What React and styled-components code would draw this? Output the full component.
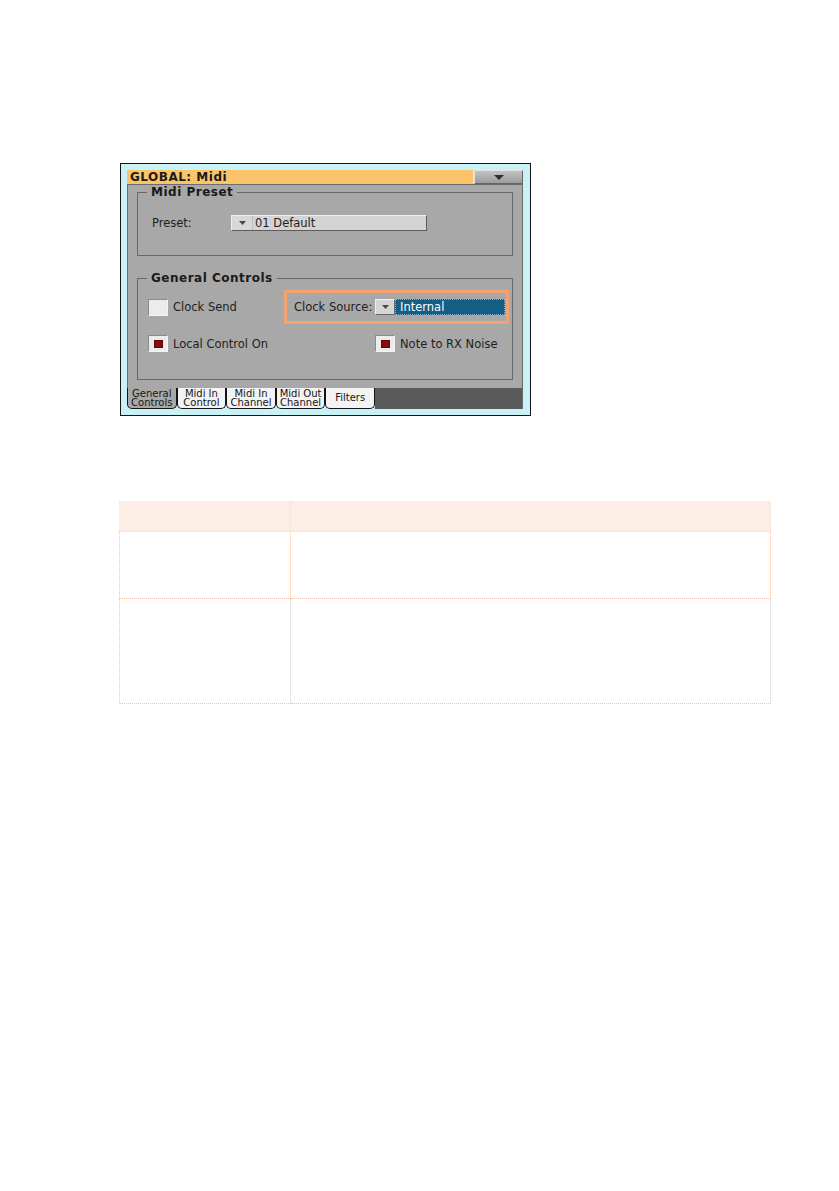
import React from "react";
import styled, { createGlobalStyle } from "styled-components";

const GlobalStyle = createGlobalStyle`
  html, body { margin: 0; padding: 0; background: #ffffff; }
  body { font-family: "DejaVu Sans", "Liberation Sans", sans-serif; }
`;

const Page = styled.div`
  box-sizing: border-box;
  min-height: 1191px;
  padding: 163px 0 0 120px;
`;

const Frame = styled.div`
  box-sizing: border-box;
  width: 411px;
  border: 1px solid #161616;
  background: #c8f2f6;
  padding: 6px 7px 6px 6px;
  display: flex;
  flex-direction: column;
`;

const TitleBar = styled.div`
  display: flex;
  height: 14px;
`;

const TitleText = styled.div`
  flex: 1;
  background: #fcc46a;
  color: #1b1b1b;
  font-weight: bold;
  font-size: 12px;
  letter-spacing: 0.5px;
  line-height: 14px;
  padding-left: 3px;
`;

const MenuButton = styled.div`
  box-sizing: border-box;
  width: 49px;
  margin-left: 1px;
  background: linear-gradient(#c2c2c2, #9d9d9d);
  border: 1px solid;
  border-color: #e2e2e2 #666 #666 #e2e2e2;
  display: flex;
  align-items: center;
  justify-content: center;
`;

const Panel = styled.div`
  box-sizing: border-box;
  height: 204px;
  background: #a8a8a8;
  border: 1px solid #6c6c6c;
  border-bottom: none;
  padding: 0 9px;
  display: flex;
  flex-direction: column;
`;

const Group = styled.fieldset`
  margin: ${(p) => p.$top || 0}px 0 0 0;
  min-width: 0;
  border: 1px solid #686868;
  padding: ${(p) => p.$pad};
`;

const Legend = styled.legend`
  margin-left: ${(p) => p.$shift}px;
  padding: 0 4px;
  font-weight: bold;
  font-size: 12px;
  letter-spacing: 0.5px;
  line-height: 14px;
  color: #1a1a1a;
`;

const Text = styled.span`
  font-size: 11.5px;
  line-height: 14px;
  color: ${(p) => p.$color || "#1e1e1e"};
  white-space: nowrap;
`;

const PresetRow = styled.div`
  display: flex;
  align-items: center;
  height: 16px;
`;

const FieldLabel = styled(Text)`
  width: ${(p) => p.$w}px;
  flex: none;
`;

const Dropdown = styled.div`
  box-sizing: border-box;
  width: 196px;
  height: 16px;
  display: flex;
  background: #d4d4d4;
  border: 1px solid;
  border-color: #efefef #5c5c5c #5c5c5c #efefef;
`;

const DropArrow = styled.div`
  box-sizing: border-box;
  width: ${(p) => p.$w || 21}px;
  height: ${(p) => p.$h || 14}px;
  flex: none;
  display: flex;
  align-items: center;
  justify-content: center;
  background: #d8d8d8;
  border-right: 1px solid #bdbdbd;
`;

const DropText = styled(Text)`
  padding-left: 2px;
`;

const ControlsGrid = styled.div`
  display: grid;
  grid-template-columns: 136px 225px;
  row-gap: 11px;
  align-items: center;
`;

const CheckItem = styled.div`
  display: flex;
  align-items: center;
  gap: 5px;
  padding-left: ${(p) => p.$indent || 0}px;
`;

const CheckBox = styled.div`
  box-sizing: border-box;
  width: 20px;
  height: 17px;
  flex: none;
  background: #ececec;
  border: 1px solid;
  border-color: #8a8a8a #f4f4f4 #f4f4f4 #8a8a8a;
  display: flex;
  align-items: center;
  justify-content: center;
`;

const CheckMark = styled.div`
  width: 9px;
  height: 8px;
  background: #8b0a0a;
  border: 1px solid #5c0404;
  box-sizing: border-box;
`;

const SourceBox = styled.div`
  box-sizing: border-box;
  height: 34px;
  border: 3px solid #f4a270;
  display: flex;
  align-items: center;
  padding: 0 1px 0 7px;
`;

const SmallDrop = styled.div`
  box-sizing: border-box;
  width: 20px;
  height: 16px;
  flex: none;
  background: #d6d6d6;
  border: 1px solid;
  border-color: #f0f0f0 #6a6a6a #6a6a6a #f0f0f0;
  display: flex;
  align-items: center;
  justify-content: center;
`;

const BlueField = styled.div`
  box-sizing: border-box;
  flex: 1;
  height: 16px;
  background: #155e84;
  border: 1px dotted #7eaecb;
  padding-left: 4px;
  display: flex;
  align-items: center;
`;

const TabRow = styled.div`
  display: flex;
  height: 21px;
`;

const Tab = styled.div`
  box-sizing: border-box;
  width: 49.6px;
  flex: none;
  background: ${(p) => (p.$active ? "#a8a8a8" : "#f3f3f3")};
  border: 1px solid #141414;
  border-top: none;
  border-radius: 0 0 5px 5px;
  display: flex;
  flex-direction: column;
  align-items: center;
  justify-content: center;
  font-size: 10px;
  line-height: 9.5px;
  color: #151515;
  white-space: nowrap;
`;

const TabFiller = styled.div`
  flex: 1;
  background: #5a5a5a;
  border-right: 1px solid #6c6c6c;
`;

const Table = styled.table`
  margin: 85px 0 0 -1px;
  width: 652px;
  border-collapse: collapse;
`;

const HeadCell = styled.th`
  height: 29px;
  padding: 0;
  background: #fdeee5;
  border: 1px dotted #f7dccb;
  width: ${(p) => (p.$w ? `${p.$w}px` : "auto")};
`;

const BodyRow = styled.tr`
  height: ${(p) => p.$h}px;
`;

const BodyCell = styled.td`
  padding: 0;
  border: 1px dotted #f0c3a6;
`;

const Triangle = ({ w = 7, h = 4, color = "#4a4a4a" }) => (
  <svg width={w} height={h} viewBox={`0 0 ${w} ${h}`}>
    <polygon points={`0,0 ${w},0 ${w / 2},${h}`} fill={color} />
  </svg>
);

const Check = ({ on, label, indent }) => (
  <CheckItem $indent={indent}>
    <CheckBox>{on && <CheckMark />}</CheckBox>
    <Text>{label}</Text>
  </CheckItem>
);

const tabs = [
  ["General", "Controls"],
  ["Midi In", "Control"],
  ["Midi In", "Channel"],
  ["Midi Out", "Channel"],
  ["Filters"],
];

export default function App() {
  return (
    <>
      <GlobalStyle />
      <Page>
        <Frame>
          <TitleBar>
            <TitleText>GLOBAL: Midi</TitleText>
            <MenuButton>
              <Triangle w={10} h={5} color="#2e2e2e" />
            </MenuButton>
          </TitleBar>
          <Panel>
            <Group $pad="16px 10px 24px 14px">
              <Legend $shift={-5}>Midi Preset</Legend>
              <PresetRow>
                <FieldLabel $w={79}>Preset:</FieldLabel>
                <Dropdown>
                  <DropArrow>
                    <Triangle />
                  </DropArrow>
                  <DropText>01 Default</DropText>
                </Dropdown>
              </PresetRow>
            </Group>
            <Group $top={15} $pad="5px 4px 27px 10px">
              <Legend $shift={-1}>General Controls</Legend>
              <ControlsGrid>
                <Check label="Clock Send" />
                <SourceBox>
                  <FieldLabel $w={81}>Clock Source:</FieldLabel>
                  <SmallDrop>
                    <Triangle />
                  </SmallDrop>
                  <BlueField>
                    <Text $color="#ffffff">Internal</Text>
                  </BlueField>
                </SourceBox>
                <Check on label="Local Control On" />
                <Check on label="Note to RX Noise" indent={91} />
              </ControlsGrid>
            </Group>
          </Panel>
          <TabRow>
            {tabs.map((t, i) => (
              <Tab key={i} $active={i === 0}>
                {t.map((line) => (
                  <span key={line}>{line}</span>
                ))}
              </Tab>
            ))}
            <TabFiller />
          </TabRow>
        </Frame>
        <Table>
          <thead>
            <tr>
              <HeadCell $w={170} />
              <HeadCell />
            </tr>
          </thead>
          <tbody>
            <BodyRow $h={67}>
              <BodyCell />
              <BodyCell />
            </BodyRow>
            <BodyRow $h={105}>
              <BodyCell />
              <BodyCell />
            </BodyRow>
          </tbody>
        </Table>
      </Page>
    </>
  );
}
